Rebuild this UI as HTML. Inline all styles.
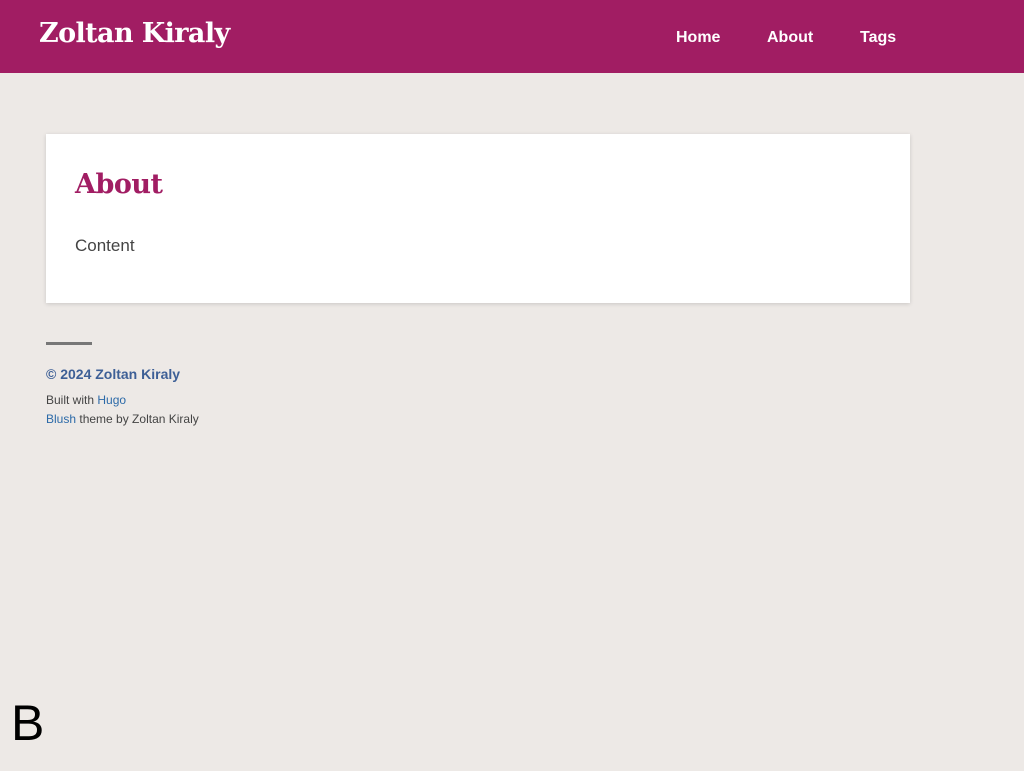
<!DOCTYPE html>
<html><head><meta charset="utf-8"><style>
body{margin:0;background:#ede9e6;font-family:"Liberation Sans",sans-serif;width:1024px;height:771px;position:relative;overflow:hidden}
.hd{position:absolute;left:0;top:0;width:1024px;height:73px;background:#a11d63}
.logo{position:absolute;left:39px;top:18px;font-family:"DejaVu Serif","Liberation Serif",serif;font-weight:bold;font-size:27px;color:#fff;letter-spacing:-0.6px}
.nav{position:absolute;top:29px;font-weight:bold;font-size:16px;color:#fff}
.card{position:absolute;left:46px;top:134px;width:864px;height:169px;background:#fff;box-shadow:0 1px 4px rgba(0,0,0,.15)}
h1{position:absolute;left:29px;top:35px;margin:0;font-family:"DejaVu Serif",serif;font-weight:bold;font-size:27px;color:#a11d63;letter-spacing:-0.5px}
.ct{position:absolute;left:29px;top:102px;font-size:17px;color:#444}
.bar{position:absolute;left:46px;top:342px;width:46px;height:3px;background:#777}
.cp{position:absolute;left:46px;top:366px;font-weight:bold;font-size:14px;color:#3d5f96}
.s{position:absolute;left:46px;font-size:12px;color:#444}
a{color:#2c6aa8;text-decoration:none}
.B{position:absolute;left:11px;top:694px;font-size:50px;color:#000}
</style></head><body>
<div class="hd"><div class="logo">Zoltan Kiraly</div>
<div class="nav" style="left:676px">Home</div><div class="nav" style="left:767px">About</div><div class="nav" style="left:860px">Tags</div></div>
<div class="card"><h1>About</h1><div class="ct">Content</div></div>
<div class="bar"></div>
<div class="cp">© 2024 Zoltan Kiraly</div>
<div class="s" style="top:393px">Built with <a>Hugo</a></div>
<div class="s" style="top:412px"><a>Blush</a> theme by Zoltan Kiraly</div>
<div class="B">B</div>
</body></html>
